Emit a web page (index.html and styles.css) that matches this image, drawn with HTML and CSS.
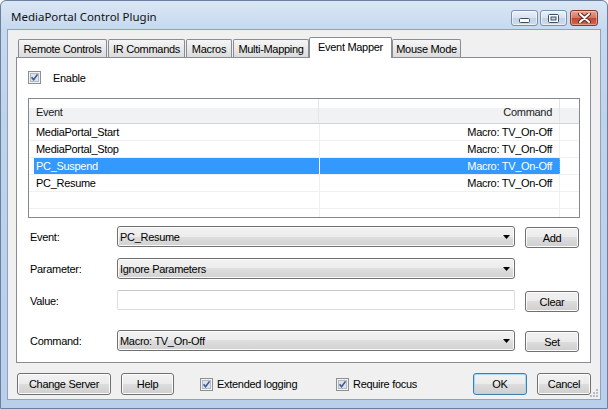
FILE: index.html
```html
<!DOCTYPE html>
<html>
<head>
<meta charset="utf-8">
<link rel="stylesheet" href="styles.css">
</head>
<body>
<div class="window">
  <div class="titlebar">
    <span class="title">MediaPortal Control Plugin</span>
    <div class="caption-buttons">
      <div class="cbtn cmin"><svg width="11" height="5" viewBox="0 0 11 5"><rect x="0.5" y="0.5" width="10" height="4" rx="1" fill="#fff" stroke="#3d4c63"/></svg></div>
      <div class="cbtn cmax"><svg width="11" height="9" viewBox="0 0 11 9"><rect x="0.5" y="0.5" width="10" height="8" rx="1" fill="#fff" stroke="#3d4c63"/><rect x="3" y="3" width="5" height="3" fill="#c9d7e9" stroke="#3d4c63"/></svg></div>
      <div class="cbtn cclose"><svg width="13" height="10" viewBox="0 0 13 10"><path d="M2 1 L11 9 M11 1 L2 9" stroke="#5a2418" stroke-width="4" stroke-linecap="round"/><path d="M2 1 L11 9 M11 1 L2 9" stroke="#fff" stroke-width="2" stroke-linecap="round"/></svg></div>
    </div>
  </div>
  <div class="client">
    <div class="tabs">
      <div class="tab w-rc">Remote Controls</div>
      <div class="tab w-ir">IR Commands</div>
      <div class="tab w-ma">Macros</div>
      <div class="tab w-mm">Multi-Mapping</div>
      <div class="tab active w-em">Event Mapper</div>
      <div class="tab w-mo">Mouse Mode</div>
    </div>
    <div class="panel">
      <div class="check-row enable">
        <svg class="cb" width="13" height="13" viewBox="0 0 13 13"><rect x="0.5" y="0.5" width="12" height="12" fill="#f2f2f2" stroke="#8e8f8f"/><rect x="2.5" y="2.5" width="8" height="8" fill="#dde3ec" stroke="#b4bac4"/><path d="M3.6 6.3 L5.6 8.8 L9.5 3.4" fill="none" stroke="#3f5593" stroke-width="1.6"/></svg>
        <span class="enable-text">Enable</span>
      </div>
      <div class="list">
        <div class="lv-head">
          <div class="c1">Event</div>
          <div class="c2">Command</div>
          <div class="c3"></div>
        </div>
        <div class="lv-row"><div class="c1">MediaPortal_Start</div><div class="c2">Macro: TV_On-Off</div><div class="c3"></div></div>
        <div class="lv-row"><div class="c1">MediaPortal_Stop</div><div class="c2">Macro: TV_On-Off</div><div class="c3"></div></div>
        <div class="lv-row selected"><div class="c1">PC_Suspend</div><div class="c2">Macro: TV_On-Off</div><div class="c3"></div></div>
        <div class="lv-row"><div class="c1">PC_Resume</div><div class="c2">Macro: TV_On-Off</div><div class="c3"></div></div>
        <div class="lv-row"><div class="c1"></div><div class="c2"></div><div class="c3"></div></div>
        <div class="lv-row"><div class="c1"></div><div class="c2"></div><div class="c3"></div></div>
      </div>
      <div class="form">
        <div class="frow">
          <div class="flabel">Event:</div>
          <div class="combo"><span>PC_Resume</span><svg class="arrow" width="7" height="4" viewBox="0 0 7 4"><path d="M0 0 H7 L3.5 4 Z" fill="#000"/></svg></div>
          <div class="btn fbtn">Add</div>
        </div>
        <div class="frow">
          <div class="flabel">Parameter:</div>
          <div class="combo"><span>Ignore Parameters</span><svg class="arrow" width="7" height="4" viewBox="0 0 7 4"><path d="M0 0 H7 L3.5 4 Z" fill="#000"/></svg></div>
        </div>
        <div class="frow">
          <div class="flabel">Value:</div>
          <div class="textbox"></div>
          <div class="btn fbtn">Clear</div>
        </div>
        <div class="frow last">
          <div class="flabel">Command:</div>
          <div class="combo"><span>Macro: TV_On-Off</span><svg class="arrow" width="7" height="4" viewBox="0 0 7 4"><path d="M0 0 H7 L3.5 4 Z" fill="#000"/></svg></div>
          <div class="btn fbtn">Set</div>
        </div>
      </div>
    </div>
    <div class="bottom">
      <div class="btn b-server">Change Server</div>
      <div class="btn b-help">Help</div>
      <div class="check-row b-ext">
        <svg class="cb" width="13" height="13" viewBox="0 0 13 13"><rect x="0.5" y="0.5" width="12" height="12" fill="#f2f2f2" stroke="#8e8f8f"/><rect x="2.5" y="2.5" width="8" height="8" fill="#dde3ec" stroke="#b4bac4"/><path d="M3.6 6.3 L5.6 8.8 L9.5 3.4" fill="none" stroke="#3f5593" stroke-width="1.6"/></svg>
        <span class="ctext">Extended logging</span>
      </div>
      <div class="check-row b-req">
        <svg class="cb" width="13" height="13" viewBox="0 0 13 13"><rect x="0.5" y="0.5" width="12" height="12" fill="#f2f2f2" stroke="#8e8f8f"/><rect x="2.5" y="2.5" width="8" height="8" fill="#dde3ec" stroke="#b4bac4"/><path d="M3.6 6.3 L5.6 8.8 L9.5 3.4" fill="none" stroke="#3f5593" stroke-width="1.6"/></svg>
        <span class="ctext">Require focus</span>
      </div>
      <div class="btn b-ok default">OK</div>
      <div class="btn b-cancel">Cancel</div>
    </div>
    <svg class="grip" width="8" height="8" viewBox="0 0 8 8"><g fill="#b9bcc2"><rect x="6" y="0" width="2" height="2"/><rect x="3" y="3" width="2" height="2"/><rect x="6" y="3" width="2" height="2"/><rect x="0" y="6" width="2" height="2"/><rect x="3" y="6" width="2" height="2"/><rect x="6" y="6" width="2" height="2"/></g></svg>
  </div>
</div>
</body>
</html>
```

FILE: styles.css
```css
* { box-sizing: border-box; }
html, body { margin: 0; padding: 0; }
body {
  width: 608px;
  height: 409px;
  overflow: hidden;
  background: #ffffff;
  font-family: "Liberation Sans", Arial, sans-serif;
  font-size: 11px;
  letter-spacing: -0.3px;
  color: #000;
}

.window {
  width: 608px;
  height: 409px;
  border: 1px solid #6b80a0;
  border-radius: 6px 6px 0 0;
  background: linear-gradient(#dae6f4, #c6d9ef 29px, #bed3ec 120px, #b9cfea);
  display: flex;
  flex-direction: column;
}

.titlebar {
  height: 28px;
  display: flex;
  align-items: flex-start;
  padding-left: 10px;
}
.title {
  font-family: "Noto Sans", "Open Sans", sans-serif;
  font-size: 11.5px;
  letter-spacing: 0;
  line-height: 16px;
  margin-top: 8px;
  color: #111;
}
.caption-buttons {
  margin-left: auto;
  margin-top: 9px;
  margin-right: 9px;
  display: flex;
}
.cbtn {
  height: 16px;
  border-radius: 3px;
  display: flex;
  align-items: center;
  justify-content: center;
}
.cmin, .cmax {
  width: 27px;
  border: 1px solid #7d8fa9;
  background: linear-gradient(#eaf1f9, #d6e2f0 50%, #c3d3e8 50%, #cddcee);
  box-shadow: inset 0 0 0 1px rgba(255,255,255,0.55);
}
.cmin { margin-right: 2px; }
.cmin svg { margin-top: 5px; }
.cmax { margin-right: 3px; }
.cclose {
  width: 28px;
  border: 1px solid #83392b;
  background: linear-gradient(#e8a594, #d47361 50%, #c1452e 50%, #cf6a53);
  box-shadow: inset 0 0 0 1px rgba(255,220,210,0.45);
}

.client {
  position: relative;
  margin-left: 6px;
  width: 594px;
  height: 371px;
  border: 1px solid #8ea3bf;
  background: #f0f0f0;
  padding: 7px 9px 0 8px;
}

.tabs {
  display: flex;
  align-items: flex-end;
  height: 20px;
  margin-left: 2px;
}
.tab {
  height: 18px;
  margin-right: 1px;
  border: 1px solid #898c95;
  border-bottom: none;
  border-radius: 2px 2px 0 0;
  background: linear-gradient(#f5f5f5, #e9e9e9 50%, #dcdcdc);
  display: flex;
  align-items: center;
  justify-content: center;
  padding-top: 1px;
  white-space: nowrap;
}
.tab.active {
  position: relative;
  z-index: 1;
  height: 21px;
  margin-left: -1px;
  margin-right: 0;
  margin-bottom: -1px;
  background: #fff;
  padding-top: 0;
  padding-bottom: 2px;
}
.w-rc { width: 89px; }
.w-ir { width: 77px; }
.w-ma { width: 46px; }
.w-mm { width: 76px; }
.w-em { width: 83px; }
.w-mo { width: 69px; }

.panel {
  height: 306px;
  width: 575px;
  border: 1px solid #898c95;
  background: #fff;
  padding: 13px 0 0 11px;
}

.check-row {
  display: flex;
  align-items: center;
  height: 13px;
}
.cb { flex: none; display: block; }
.enable-text { margin-left: 12px; }

.list {
  margin-top: 14px;
  width: 552px;
  height: 120px;
  border: 1px solid #828790;
  overflow: hidden;
  background: #fff;
}
.lv-head {
  display: flex;
  height: 25px;
  border-bottom: 1px solid #d5d5d5;
  background: linear-gradient(#ffffff 0, #ffffff 9px, #f1f2f4 9px, #f1f2f4 100%);
  color: #1a1a1a;
}
.lv-head .c1, .lv-head .c2, .lv-head .c3 {
  display: flex;
  align-items: center;
  padding-top: 1px;
}
.c1 { width: 291px; padding-left: 7px; border-right: 1px solid #e3e5e8; }
.c2 { width: 240px; padding-right: 7px; justify-content: flex-end; border-right: 1px solid #e3e5e8; }
.c3 { flex: 1; }
.lv-head .c1 { width: 290px; }
.lv-head .c2 { width: 241px; }
.lv-row {
  display: flex;
  height: 17px;
  border-bottom: 1px solid #f0f0f0;
}
.lv-row .c1, .lv-row .c2 {
  display: flex;
  align-items: center;
  white-space: nowrap;
  border-right-color: #f0f0f0;
}
.lv-row.selected .c1 {
  background: linear-gradient(to right, transparent 5px, #3399ff 5px);
  color: #fff;
  border-right-color: #ffffff;
}
.lv-row.selected .c2 {
  background: #3399ff;
  color: #fff;
  border-right: 1px dotted #d8a24a;
}

.form {
  margin-top: 8px;
  width: 551px;
  display: flex;
  flex-direction: column;
  gap: 10px;
}
.frow {
  display: flex;
  align-items: flex-start;
  height: 22px;
}
.frow.last { margin-top: 8px; }
.flabel {
  width: 89px;
  height: 21px;
  padding-left: 2px;
  display: flex;
  align-items: center;
}
.combo {
  width: 398px;
  height: 21px;
  border: 1px solid #707070;
  border-radius: 3px;
  background: linear-gradient(#f3f3f3, #ececec 50%, #dfdfdf 50%, #d1d1d1);
  box-shadow: inset 0 0 0 1px #fbfbfb;
  display: flex;
  align-items: center;
  padding: 0 4px 0 2px;
}
.combo span { flex: 1; }
.arrow { display: block; }
.textbox {
  width: 398px;
  height: 20px;
  border: 1px solid #dadde3;
  border-top-color: #c3c6cc;
  border-radius: 2px;
  background: #fff;
}
.btn {
  height: 22px;
  border: 1px solid #707070;
  border-radius: 3px;
  background: linear-gradient(#f2f2f2, #ebebeb 50%, #dddddd 50%, #cfcfcf);
  box-shadow: inset 0 0 0 1px #fcfcfc;
  display: flex;
  align-items: center;
  justify-content: center;
  white-space: nowrap;
}
.fbtn {
  width: 54px;
  height: 21px;
  margin-left: 10px;
  margin-top: 1px;
}
.btn.default {
  border-color: #3c7fb1;
  box-shadow: inset 0 0 0 1px #a5d8f4;
}

.bottom {
  display: flex;
  align-items: center;
  margin-top: 10px;
  height: 22px;
}
.b-server { width: 94px; margin-left: 1px; }
.b-help { width: 53px; margin-left: 10px; }
.b-ext { margin-left: 26px; width: 136px; }
.b-req { width: 120px; }
.ctext { margin-left: 4px; }
.b-ok { width: 54px; margin-left: auto; }
.b-cancel { width: 54px; margin-left: 10px; }

.grip {
  position: absolute;
  right: 2px;
  bottom: 2px;
}
```
